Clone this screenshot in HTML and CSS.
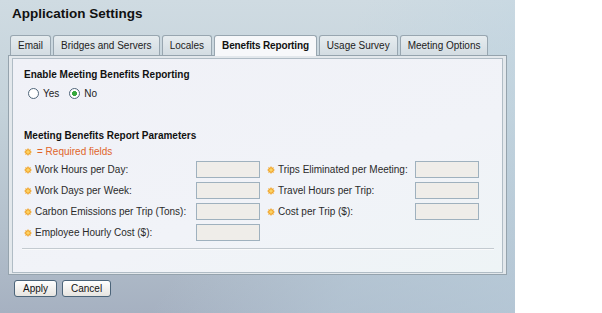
FILE: index.html
```html
<!DOCTYPE html>
<html lang="en">
<head>
  <meta charset="UTF-8" />
  <title>Application Settings</title>
  <link rel="stylesheet" href="styles.css">
</head>
<body>
  <svg width="0" height="0" style="position:absolute">
    <symbol id="req" viewBox="0 0 16 16">
      <polygon fill="#f0a021" points="16,8 12.6,9.9 13.7,13.7 9.9,12.6 8,16 6.1,12.6 2.3,13.7 3.4,9.9 0,8 3.4,6.1 2.3,2.3 6.1,3.4 8,0 9.9,3.4 13.7,2.3 12.6,6.1"/>
      <circle cx="8" cy="8" r="3.6" fill="#fbd267"/>
    </symbol>
  </svg>

  <div class="app">
    <h1 class="title">Application Settings</h1>

    <!-- Tabs -->
    <div class="tabs">
      <div class="tab">Email</div>
      <div class="tab">Bridges and Servers</div>
      <div class="tab">Locales</div>
      <div class="tab active">Benefits Reporting</div>
      <div class="tab">Usage Survey</div>
      <div class="tab">Meeting Options</div>
    </div>

    <!-- Panel -->
    <div class="panel">
      <div class="panel-inner">
        <h2 class="heading">Enable Meeting Benefits Reporting</h2>
        <div class="radios">
          <label class="radio"><input type="radio" name="enable"> Yes</label>
          <label class="radio"><input type="radio" name="enable" checked> No</label>
        </div>

        <h2 class="heading params">Meeting Benefits Report Parameters</h2>
        <div class="required-note"><svg class="req"><use href="#req"/></svg>= Required fields</div>

        <div class="fields">
          <label class="field-label"><svg class="req"><use href="#req"/></svg>Work Hours per Day:</label>
          <input class="field" type="text">
          <label class="field-label right"><svg class="req"><use href="#req"/></svg>Trips Eliminated per Meeting:</label>
          <input class="field" type="text">

          <label class="field-label"><svg class="req"><use href="#req"/></svg>Work Days per Week:</label>
          <input class="field" type="text">
          <label class="field-label right"><svg class="req"><use href="#req"/></svg>Travel Hours per Trip:</label>
          <input class="field" type="text">

          <label class="field-label"><svg class="req"><use href="#req"/></svg>Carbon Emissions per Trip (Tons):</label>
          <input class="field" type="text">
          <label class="field-label right"><svg class="req"><use href="#req"/></svg>Cost per Trip ($):</label>
          <input class="field" type="text">

          <label class="field-label"><svg class="req"><use href="#req"/></svg>Employee Hourly Cost ($):</label>
          <input class="field" type="text">
        </div>

        <div class="separator"></div>
      </div>
    </div>

    <div class="actions">
      <button class="btn">Apply</button>
      <button class="btn">Cancel</button>
    </div>
  </div>
</body>
</html>
```

FILE: styles.css
```css
/* RESET */
* { box-sizing: border-box; margin: 0; padding: 0; }
body {
  font-family: 'Liberation Sans', Arial, sans-serif;
  font-size: 10px;
  color: #2a2a2a;
  background: #fff;
}

/* APP AREA */
.app {
  width: 515px;
  height: 313px;
  overflow: hidden;
  background:
    linear-gradient(125deg, rgba(255,255,255,0) 50%, rgba(190,212,226,0.45) 75%, rgba(190,212,226,0.6) 100%),
    linear-gradient(180deg, #cfdbe2 0%, #c4d2da 35%, #b2bfcb 75%, #a6b1c1 100%);
}
.title {
  font-size: 13.5px;
  font-weight: bold;
  color: #111;
  line-height: 18px;
  padding: 5px 0 0 12px;
}

/* TABS */
.tabs {
  display: flex;
  gap: 2px;
  margin: 12px 0 0 10px;
  position: relative;
  z-index: 1;
}
.tab {
  height: 20px;
  line-height: 19px;
  padding: 0 7px;
  color: #222;
  background: linear-gradient(#e6ecef, #d3dce2);
  border: 1px solid #98a6b0;
  border-bottom: none;
  border-radius: 3px 3px 0 0;
}
.tab.active {
  font-weight: bold;
  color: #111;
  background: #f7f8fa;
  height: 21px;
  margin-bottom: -1px;
  letter-spacing: -0.15px;
}

/* PANEL */
.panel {
  margin-left: 8px;
  width: 499px;
  height: 220px;
  border: 1px solid #95a3ad;
  background: #e3e8ec;
  padding: 2px 3px 1px 3px;
}
.panel-inner {
  height: 100%;
  border: 1px solid #b0bcc5;
  background: linear-gradient(160deg, #f0f1f7 0%, #f1f3f8 60%, #eef4f6 100%);
  padding: 9px 8px 0 11px;
}
.heading {
  font-size: 10px;
  font-weight: bold;
  color: #111;
  line-height: 14px;
}
.heading.params { margin-top: 28px; }

/* RADIOS */
.radios {
  display: flex;
  gap: 10px;
  margin: 3px 0 0 4px;
  height: 16px;
  align-items: center;
}
.radio {
  display: flex;
  align-items: center;
  gap: 4px;
  color: #222;
}
.radio input {
  appearance: none;
  width: 11px;
  height: 11px;
  border: 1px solid #50667a;
  border-radius: 50%;
  background: #fff;
  margin: 0;
}
.radio input:checked {
  background: radial-gradient(circle, #35a83c 0, #35a83c 2.2px, #fff 2.8px);
}

/* REQUIRED */
.req {
  width: 8px;
  height: 8px;
  flex: none;
}
.required-note {
  display: flex;
  align-items: center;
  gap: 5px;
  line-height: 14px;
  margin-top: 2px;
  color: #e0652a;
}

/* FIELDS */
.fields {
  display: grid;
  grid-template-columns: 172px 64px 155px 64px;
  row-gap: 4px;
  margin-top: 2px;
}
.field-label {
  display: flex;
  align-items: center;
  gap: 3px;
  height: 17px;
  color: #2a2a2a;
  white-space: nowrap;
}
.field-label.right { margin-left: 7px; }
.field {
  width: 64px;
  height: 17px;
  border: 1px solid #9fb1be;
  background: #efede9;
}

.separator {
  height: 2px;
  margin: 7px 0 0 -2px;
  border-top: 1px solid #c3cad0;
  border-bottom: 1px solid #f9fafb;
}

/* BUTTONS */
.actions {
  display: flex;
  gap: 5px;
  margin: 5px 0 0 14px;
}
.btn {
  font-family: 'Liberation Sans', Arial, sans-serif;
  font-size: 10px;
  color: #111;
  height: 17px;
  padding: 0 8px;
  border: 1px solid #4c6479;
  border-radius: 3px;
  background: linear-gradient(#ffffff, #e6e4e0);
}
```
